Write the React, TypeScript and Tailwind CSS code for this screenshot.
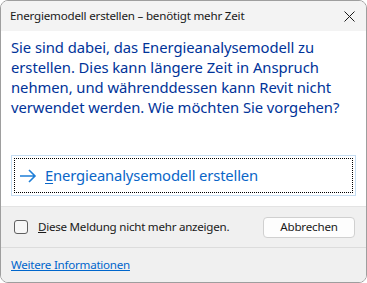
export default function App() {
  const font = { fontFamily: '"Noto Sans", "Open Sans", sans-serif' };
  return (
    <div className="h-[283px] w-[367px] bg-white" style={font}>
      <div className="flex h-[283px] w-[367px] flex-col overflow-hidden rounded-[8px] border border-[#9e9e9e]">
        {/* title bar */}
        <div className="flex h-[30px] shrink-0 items-center justify-between bg-[#f3f3f3] pl-[9px] pr-[11px]">
          <span className="text-[11.6px] tracking-[-0.2px] text-[#1a1a1a]">
            Energiemodell erstellen – benötigt mehr Zeit
          </span>
          <svg width="11" height="11" viewBox="0 0 11 11" className="mt-[1px]">
            <path d="M0.5 0.5L10.5 10.5M10.5 0.5L0.5 10.5" stroke="#1a1a1a" strokeWidth="1" />
          </svg>
        </div>

        {/* body */}
        <div className="flex h-[175px] shrink-0 flex-col bg-white px-[10px] pt-[6px]">
          <p className="text-[14.8px] leading-[20px] tracking-[-0.05px] text-[#003399]">
            Sie sind dabei, das Energieanalysemodell zu erstellen. Dies kann längere Zeit in Anspruch nehmen, und
            währenddessen kann Revit nicht verwendet werden. Wie möchten Sie vorgehen?
          </p>
          <div className="mt-[38px] h-[41px] border border-[#c4dcf2] p-[2px]">
            <div className="flex h-full items-center gap-[8px] border border-dotted border-black pl-[4px]">
              <svg width="18" height="14" viewBox="0 0 18 14">
                <path d="M1 7H16M10 1L16 7L10 13" stroke="#1f7fd8" strokeWidth="1.6" fill="none" />
              </svg>
              <span className="text-[14.8px] tracking-[-0.15px] text-[#0a66c8]">
                <span className="underline underline-offset-2">E</span>nergieanalysemodell erstellen
              </span>
            </div>
          </div>
        </div>

        {/* footer */}
        <div className="flex h-[41px] shrink-0 items-center justify-between border-t border-[#e3e3e3] bg-[#f0f0f0] pl-[13px] pr-[11px]">
          <label className="flex items-center gap-[10px] text-[11.6px] tracking-[-0.25px] text-[#1a1a1a]">
            <span className="h-[14px] w-[14px] rounded-[3px] border border-[#5f5f5f] bg-[#f7f7f7]" />
            <span>
              <span className="underline">D</span>iese Meldung nicht mehr anzeigen.
            </span>
          </label>
          <button className="h-[21px] w-[92px] rounded-[4px] border border-[#d0d0d0] bg-[#fdfdfd] text-[11.6px] tracking-[-0.2px] text-[#1a1a1a]">
            Abbrechen
          </button>
        </div>
        <div className="flex flex-1 items-center border-t border-[#dcdcdc] bg-[#f0f0f0] pl-[10px]">
          <a className="text-[11.6px] tracking-[-0.25px] text-[#0066cc] underline">Weitere Informationen</a>
        </div>
      </div>
    </div>
  );
}
